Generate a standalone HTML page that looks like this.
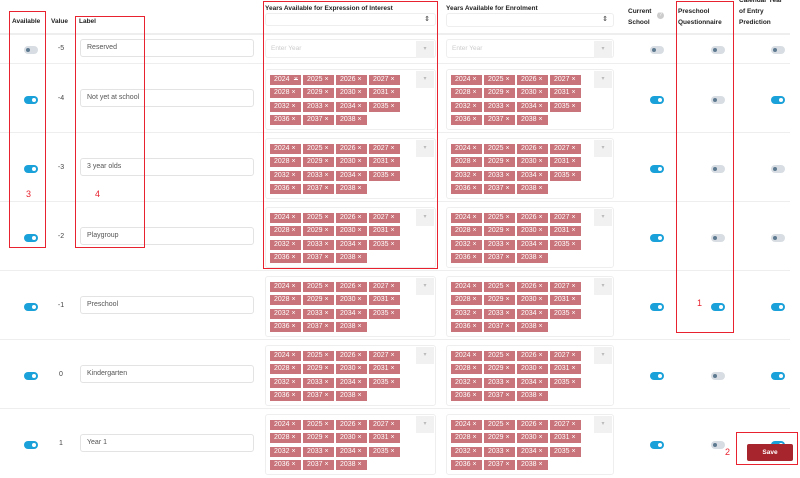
<!DOCTYPE html>
<html><head><meta charset="utf-8"><style>
*{box-sizing:border-box;margin:0;padding:0}
body{width:800px;height:464px;overflow:hidden;background:#fff;font-family:"Liberation Sans",sans-serif;position:relative;color:#333}
.a{position:absolute}
.h{font-size:6.5px;font-weight:bold;color:#222;line-height:11px}
.line{position:absolute;left:0;width:790px;height:1px;background:#eee}
.inp{position:absolute;left:80px;width:174px;height:18px;border:1px solid #e3e3e3;border-radius:3px;font-size:7px;color:#555;padding:4px 6px}
.val{position:absolute;left:54px;width:14px;text-align:center;font-size:7px;color:#444}
.tg{position:absolute;width:34px;height:18px}
.tg i{position:absolute;left:0;top:4px;width:14px;height:8px;border-radius:4px;background:#d7dde2}
.tg i:after{content:"";position:absolute;left:2px;top:2px;width:4px;height:4px;border-radius:50%;background:#5e7a90}
.tg.on i{background:#1ba1d9}
.tg.on i:after{left:8px;background:#fff}
.box{position:absolute;border:1px solid #eee;border-radius:3px}
.dd{position:absolute;right:1px;top:1px;width:18px;height:17px;background:#f1f1f1;font-size:6px;color:#bbb;text-align:center;line-height:17px}
.chips{position:absolute;left:4px;top:5px;width:140px;display:flex;flex-wrap:wrap}
.chips b{display:flex;justify-content:space-between;width:31px;height:10px;margin:0 2px 3.4px 0;background:#c9747a;color:#fff;font-size:7px;font-weight:normal;line-height:10px;padding:0 3px 0 4px}
.rb{position:absolute;border:1.5px solid #e8232f}
.rn{position:absolute;color:#e8232f;font-size:9px}
</style></head><body>
<div class="a h" style="left:12px;top:16px">Available</div>
<div class="a h" style="left:51px;top:16px">Value</div>
<div class="a h" style="left:79px;top:16px">Label</div>
<div class="a h" style="left:265px;top:3px">Years Available for Expression of Interest</div>
<div class="box" style="left:265px;top:13px;width:171px;height:13px"><span class="a" style="right:5px;top:1px;font-size:7px">⇕</span></div>
<div class="a h" style="left:446px;top:3px">Years Available for Enrolment</div>
<div class="box" style="left:446px;top:13px;width:168px;height:14px"><span class="a" style="right:5px;top:1px;font-size:7px">⇕</span></div>
<div class="a h" style="left:628px;top:6px">Current<br>School</div>
<div class="a" style="left:657px;top:12px;width:7px;height:7px;border-radius:50%;background:#ccc;color:#fff;font-size:5px;text-align:center;line-height:7px">?</div>
<div class="a h" style="left:678px;top:6px">Preschool<br>Questionnaire</div>
<div class="a h" style="left:739px;top:-5px">Calendar Year<br>of Entry<br>Prediction</div>
<div class="line" style="top:33px;height:2px"></div>

<div class="tg" style="left:24px;top:42px"><i></i></div>
<div class="val" style="top:45px">-5</div>
<div class="inp" style="top:39px">Reserved</div>
<div class="box" style="left:265px;top:39px;width:171px;height:19px"><span class="a" style="left:5px;top:5px;font-size:6.5px;color:#ccc">Enter Year</span><div class="dd">▾</div></div>
<div class="box" style="left:446px;top:39px;width:168px;height:19px"><span class="a" style="left:5px;top:5px;font-size:6.5px;color:#ccc">Enter Year</span><div class="dd">▾</div></div>
<div class="tg" style="left:650px;top:42px"><i></i></div>
<div class="tg" style="left:711px;top:42px"><i></i></div>
<div class="tg" style="left:771px;top:42px"><i></i></div>
<div class="line" style="top:63px"></div>

<div class="a" style="left:0;top:64px;width:800px;height:69px">
<div class="tg on" style="left:24px;top:28px"><i></i></div><div class="val" style="top:31px">-4</div><div class="inp" style="top:25px">Not yet at school</div>
<div class="box" style="left:265px;top:5px;width:171px;height:61px"><div class="chips"><b>2024 <s>×</s></b><b>2025 ×</b><b>2026 ×</b><b>2027 ×</b><b>2028 ×</b><b>2029 ×</b><b>2030 ×</b><b>2031 ×</b><b>2032 ×</b><b>2033 ×</b><b>2034 ×</b><b>2035 ×</b><b>2036 ×</b><b>2037 ×</b><b>2038 ×</b></div><div class="dd">▾</div></div>
<div class="box" style="left:446px;top:5px;width:168px;height:61px"><div class="chips"><b>2024 ×</b><b>2025 ×</b><b>2026 ×</b><b>2027 ×</b><b>2028 ×</b><b>2029 ×</b><b>2030 ×</b><b>2031 ×</b><b>2032 ×</b><b>2033 ×</b><b>2034 ×</b><b>2035 ×</b><b>2036 ×</b><b>2037 ×</b><b>2038 ×</b></div><div class="dd">▾</div></div>
<div class="tg on" style="left:650px;top:28px"><i></i></div><div class="tg" style="left:711px;top:28px"><i></i></div><div class="tg on" style="left:771px;top:28px"><i></i></div>
<div class="line" style="top:68px"></div></div>

<div class="a" style="left:0;top:133px;width:800px;height:69px">
<div class="tg on" style="left:24px;top:28px"><i></i></div><div class="val" style="top:31px">-3</div><div class="inp" style="top:25px">3 year olds</div>
<div class="box" style="left:265px;top:5px;width:171px;height:61px"><div class="chips"><b>2024 ×</b><b>2025 ×</b><b>2026 ×</b><b>2027 ×</b><b>2028 ×</b><b>2029 ×</b><b>2030 ×</b><b>2031 ×</b><b>2032 ×</b><b>2033 ×</b><b>2034 ×</b><b>2035 ×</b><b>2036 ×</b><b>2037 ×</b><b>2038 ×</b></div><div class="dd">▾</div></div>
<div class="box" style="left:446px;top:5px;width:168px;height:61px"><div class="chips"><b>2024 ×</b><b>2025 ×</b><b>2026 ×</b><b>2027 ×</b><b>2028 ×</b><b>2029 ×</b><b>2030 ×</b><b>2031 ×</b><b>2032 ×</b><b>2033 ×</b><b>2034 ×</b><b>2035 ×</b><b>2036 ×</b><b>2037 ×</b><b>2038 ×</b></div><div class="dd">▾</div></div>
<div class="tg on" style="left:650px;top:28px"><i></i></div><div class="tg" style="left:711px;top:28px"><i></i></div><div class="tg" style="left:771px;top:28px"><i></i></div>
<div class="line" style="top:68px"></div></div>

<div class="a" style="left:0;top:202px;width:800px;height:69px">
<div class="tg on" style="left:24px;top:28px"><i></i></div><div class="val" style="top:31px">-2</div><div class="inp" style="top:25px">Playgroup</div>
<div class="box" style="left:265px;top:5px;width:171px;height:61px"><div class="chips"><b>2024 ×</b><b>2025 ×</b><b>2026 ×</b><b>2027 ×</b><b>2028 ×</b><b>2029 ×</b><b>2030 ×</b><b>2031 ×</b><b>2032 ×</b><b>2033 ×</b><b>2034 ×</b><b>2035 ×</b><b>2036 ×</b><b>2037 ×</b><b>2038 ×</b></div><div class="dd">▾</div></div>
<div class="box" style="left:446px;top:5px;width:168px;height:61px"><div class="chips"><b>2024 ×</b><b>2025 ×</b><b>2026 ×</b><b>2027 ×</b><b>2028 ×</b><b>2029 ×</b><b>2030 ×</b><b>2031 ×</b><b>2032 ×</b><b>2033 ×</b><b>2034 ×</b><b>2035 ×</b><b>2036 ×</b><b>2037 ×</b><b>2038 ×</b></div><div class="dd">▾</div></div>
<div class="tg on" style="left:650px;top:28px"><i></i></div><div class="tg" style="left:711px;top:28px"><i></i></div><div class="tg" style="left:771px;top:28px"><i></i></div>
<div class="line" style="top:68px"></div></div>

<div class="a" style="left:0;top:271px;width:800px;height:69px">
<div class="tg on" style="left:24px;top:28px"><i></i></div><div class="val" style="top:31px">-1</div><div class="inp" style="top:25px">Preschool</div>
<div class="box" style="left:265px;top:5px;width:171px;height:61px"><div class="chips"><b>2024 ×</b><b>2025 ×</b><b>2026 ×</b><b>2027 ×</b><b>2028 ×</b><b>2029 ×</b><b>2030 ×</b><b>2031 ×</b><b>2032 ×</b><b>2033 ×</b><b>2034 ×</b><b>2035 ×</b><b>2036 ×</b><b>2037 ×</b><b>2038 ×</b></div><div class="dd">▾</div></div>
<div class="box" style="left:446px;top:5px;width:168px;height:61px"><div class="chips"><b>2024 ×</b><b>2025 ×</b><b>2026 ×</b><b>2027 ×</b><b>2028 ×</b><b>2029 ×</b><b>2030 ×</b><b>2031 ×</b><b>2032 ×</b><b>2033 ×</b><b>2034 ×</b><b>2035 ×</b><b>2036 ×</b><b>2037 ×</b><b>2038 ×</b></div><div class="dd">▾</div></div>
<div class="tg on" style="left:650px;top:28px"><i></i></div><div class="tg on" style="left:711px;top:28px"><i></i></div><div class="tg on" style="left:771px;top:28px"><i></i></div>
<div class="line" style="top:68px"></div></div>

<div class="a" style="left:0;top:340px;width:800px;height:69px">
<div class="tg on" style="left:24px;top:28px"><i></i></div><div class="val" style="top:31px">0</div><div class="inp" style="top:25px">Kindergarten</div>
<div class="box" style="left:265px;top:5px;width:171px;height:61px"><div class="chips"><b>2024 ×</b><b>2025 ×</b><b>2026 ×</b><b>2027 ×</b><b>2028 ×</b><b>2029 ×</b><b>2030 ×</b><b>2031 ×</b><b>2032 ×</b><b>2033 ×</b><b>2034 ×</b><b>2035 ×</b><b>2036 ×</b><b>2037 ×</b><b>2038 ×</b></div><div class="dd">▾</div></div>
<div class="box" style="left:446px;top:5px;width:168px;height:61px"><div class="chips"><b>2024 ×</b><b>2025 ×</b><b>2026 ×</b><b>2027 ×</b><b>2028 ×</b><b>2029 ×</b><b>2030 ×</b><b>2031 ×</b><b>2032 ×</b><b>2033 ×</b><b>2034 ×</b><b>2035 ×</b><b>2036 ×</b><b>2037 ×</b><b>2038 ×</b></div><div class="dd">▾</div></div>
<div class="tg on" style="left:650px;top:28px"><i></i></div><div class="tg" style="left:711px;top:28px"><i></i></div><div class="tg on" style="left:771px;top:28px"><i></i></div>
<div class="line" style="top:68px"></div></div>

<div class="a" style="left:0;top:409px;width:800px;height:69px">
<div class="tg on" style="left:24px;top:28px"><i></i></div><div class="val" style="top:31px">1</div><div class="inp" style="top:25px">Year 1</div>
<div class="box" style="left:265px;top:5px;width:171px;height:61px"><div class="chips"><b>2024 ×</b><b>2025 ×</b><b>2026 ×</b><b>2027 ×</b><b>2028 ×</b><b>2029 ×</b><b>2030 ×</b><b>2031 ×</b><b>2032 ×</b><b>2033 ×</b><b>2034 ×</b><b>2035 ×</b><b>2036 ×</b><b>2037 ×</b><b>2038 ×</b></div><div class="dd">▾</div></div>
<div class="box" style="left:446px;top:5px;width:168px;height:61px"><div class="chips"><b>2024 ×</b><b>2025 ×</b><b>2026 ×</b><b>2027 ×</b><b>2028 ×</b><b>2029 ×</b><b>2030 ×</b><b>2031 ×</b><b>2032 ×</b><b>2033 ×</b><b>2034 ×</b><b>2035 ×</b><b>2036 ×</b><b>2037 ×</b><b>2038 ×</b></div><div class="dd">▾</div></div>
<div class="tg on" style="left:650px;top:28px"><i></i></div><div class="tg" style="left:711px;top:28px"><i></i></div><div class="tg on" style="left:771px;top:28px"><i></i></div>
</div>

<div class="a" style="left:747px;top:444px;width:46px;height:17px;background:#a7262d;border-radius:2px;color:#fff;font-size:6.5px;font-weight:bold;text-align:center;line-height:17px">Save</div>

<div class="rb" style="left:9px;top:11px;width:37px;height:237px"></div>
<div class="rb" style="left:75px;top:16px;width:70px;height:232px"></div>
<div class="rb" style="left:263px;top:1px;width:175px;height:268px"></div>
<div class="rb" style="left:676px;top:1px;width:58px;height:332px"></div>
<div class="rb" style="left:736px;top:432px;width:62px;height:33px"></div>
<div class="rn" style="left:26px;top:189px">3</div>
<div class="rn" style="left:95px;top:189px">4</div>
<div class="rn" style="left:697px;top:298px">1</div>
<div class="rn" style="left:725px;top:447px">2</div>
</body></html>
